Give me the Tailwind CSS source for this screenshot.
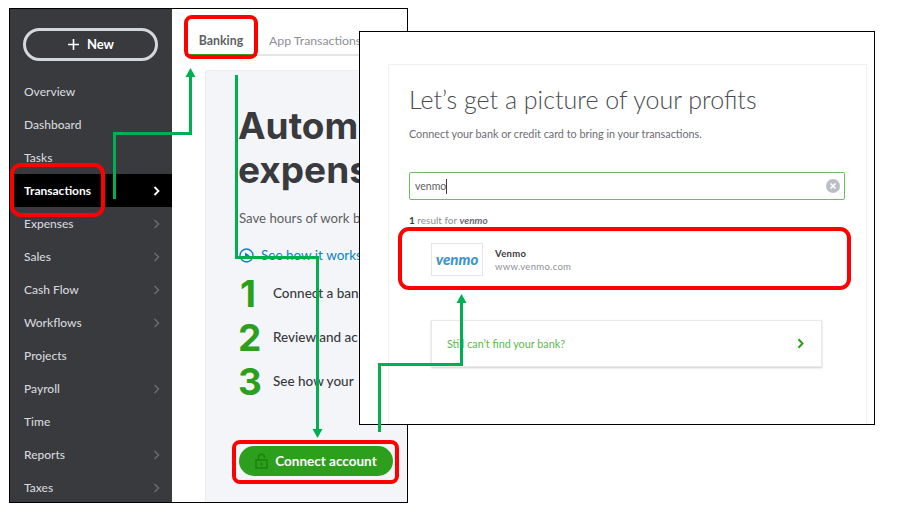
<!DOCTYPE html>
<html>
<head>
<meta charset="utf-8">
<script src="https://cdn.jsdelivr.net/npm/@tailwindcss/browser@4"></script>
</head>
<body class="bg-white">
<div class="relative w-[902px] h-[520px] overflow-hidden bg-white font-['Lato','Liberation_Sans',sans-serif]">

  <!-- Window 1 -->
  <div class="absolute left-[9px] top-[8px] w-[399px] h-[495px] border border-black flex overflow-hidden">
    <nav class="w-[162px] shrink-0 bg-[#393a3d] flex flex-col text-[#d4d7dc] text-[12px] font-medium overflow-hidden">
      <div class="shrink-0 pt-[19px] pl-[13px] pb-[14px]">
        <div class="w-[135px] h-[33px] rounded-full border-[3px] border-[#d4d7dc] flex items-center justify-center gap-[7px] text-white font-bold text-[13px]">
          <svg width="13" height="13" viewBox="0 0 13 13"><path d="M6.500 1v11M1 6.500h11" stroke="#fff" stroke-width="1.600"/></svg>
          <span>New</span>
        </div>
      </div>
      <div class="shrink-0 h-[33px] flex items-center px-[14px]">Overview</div>
      <div class="shrink-0 h-[33px] flex items-center px-[14px]">Dashboard</div>
      <div class="shrink-0 h-[33px] flex items-center px-[14px]">Tasks</div>
      <div class="shrink-0 h-[33px] flex items-center justify-between pl-[14px] pr-[12px] bg-black text-white font-bold">Transactions
        <svg width="7" height="10" viewBox="0 0 7 10"><path d="M1.500 1l4 4-4 4" fill="none" stroke="#fff" stroke-width="1.800"/></svg></div>
      <div class="shrink-0 h-[33px] flex items-center justify-between pl-[14px] pr-[12px]">Expenses
        <svg width="7" height="10" viewBox="0 0 7 10"><path d="M1.500 1l4 4-4 4" fill="none" stroke="#6b6c72" stroke-width="1.500"/></svg></div>
      <div class="shrink-0 h-[33px] flex items-center justify-between pl-[14px] pr-[12px]">Sales
        <svg width="7" height="10" viewBox="0 0 7 10"><path d="M1.500 1l4 4-4 4" fill="none" stroke="#6b6c72" stroke-width="1.500"/></svg></div>
      <div class="shrink-0 h-[33px] flex items-center justify-between pl-[14px] pr-[12px]">Cash Flow
        <svg width="7" height="10" viewBox="0 0 7 10"><path d="M1.500 1l4 4-4 4" fill="none" stroke="#6b6c72" stroke-width="1.500"/></svg></div>
      <div class="shrink-0 h-[33px] flex items-center justify-between pl-[14px] pr-[12px]">Workflows
        <svg width="7" height="10" viewBox="0 0 7 10"><path d="M1.500 1l4 4-4 4" fill="none" stroke="#6b6c72" stroke-width="1.500"/></svg></div>
      <div class="shrink-0 h-[33px] flex items-center px-[14px]">Projects</div>
      <div class="shrink-0 h-[33px] flex items-center justify-between pl-[14px] pr-[12px]">Payroll
        <svg width="7" height="10" viewBox="0 0 7 10"><path d="M1.500 1l4 4-4 4" fill="none" stroke="#6b6c72" stroke-width="1.500"/></svg></div>
      <div class="shrink-0 h-[33px] flex items-center px-[14px]">Time</div>
      <div class="shrink-0 h-[33px] flex items-center justify-between pl-[14px] pr-[12px]">Reports
        <svg width="7" height="10" viewBox="0 0 7 10"><path d="M1.500 1l4 4-4 4" fill="none" stroke="#6b6c72" stroke-width="1.500"/></svg></div>
      <div class="shrink-0 h-[33px] flex items-center justify-between pl-[14px] pr-[12px]">Taxes
        <svg width="7" height="10" viewBox="0 0 7 10"><path d="M1.500 1l4 4-4 4" fill="none" stroke="#6b6c72" stroke-width="1.500"/></svg></div>
    </nav>
    <main class="flex-1 min-w-0 flex flex-col">
      <div class="h-[47px] shrink-0 ml-[13px] border-b-2 border-[#e3e5e8] flex items-stretch whitespace-nowrap text-[12.300px]">
        <span class="w-[72px] flex items-end justify-center pb-[4px] border-b-2 border-[#2ca01c] -mb-[2px] font-bold text-[#5c5f64]">Banking</span>
        <span class="ml-[12px] flex items-end pb-[4px] text-[#8d9096]">App Transactions</span>
      </div>
      <div class="mt-[14px] ml-[33px] flex-1 bg-[#f4f5f8] border-t border-l border-[#eceef1] pl-[33px] pt-[33px] whitespace-nowrap">
        <div class="-ml-[1px] font-['Inter',sans-serif] text-[37px] leading-[44px] font-bold text-[#393a3d]">Autom<br>expens</div>
        <div class="mt-[16px] text-[13.200px] leading-[20px] text-[#5c5f64]">Save hours of work by</div>
        <div class="mt-[17px] flex items-center gap-[7px] text-[13.500px] leading-[20px] text-[#0d7fc9]">
          <svg width="15" height="15" viewBox="0 0 15 15"><circle cx="7.500" cy="7.500" r="6.500" fill="none" stroke="#0d7fc9" stroke-width="1.400"/><path d="M6 4.500l4.500 3-4.500 3z" fill="#0d7fc9"/></svg>
          <span>See how it works</span>
        </div>
        <div class="mt-[6px] flex items-center h-[44px]">
          <span class="w-[34px] pl-[1px] font-['Inter',sans-serif] text-[37px] font-bold text-[#2ca01c] leading-none">1</span>
          <span class="text-[13.500px] font-medium text-[#393a3d]">Connect a ban</span>
        </div>
        <div class="flex items-center h-[44px]">
          <span class="w-[34px] -ml-[1px] mr-[1px] font-['Inter',sans-serif] text-[37px] font-bold text-[#2ca01c] leading-none">2</span>
          <span class="text-[13.500px] font-medium text-[#393a3d]">Review and ac</span>
        </div>
        <div class="flex items-center h-[44px]">
          <span class="w-[34px] -ml-[1px] mr-[1px] font-['Inter',sans-serif] text-[37px] font-bold text-[#2ca01c] leading-none">3</span>
          <span class="text-[13.500px] font-medium text-[#393a3d]">See how your</span>
        </div>
        <div class="mt-[43px] w-[154px] h-[30px] rounded-full bg-[#2ca01c] flex items-center justify-center gap-[7px] text-white font-bold text-[13.500px]">
          <svg width="13" height="16" viewBox="0 0 13 16"><path d="M3.500 7V4.200a3 3 0 0 1 6 0V5" fill="none" stroke="#1d7f10" stroke-width="1.500"/><rect x="1" y="7" width="11" height="8" fill="none" stroke="#1d7f10" stroke-width="1.500"/><circle cx="6.500" cy="11" r="1.200" fill="#1d7f10"/></svg>
          <span>Connect account</span>
        </div>
      </div>
    </main>
  </div>

  <!-- Window 2 -->
  <div class="absolute left-[359px] top-[31px] w-[516px] h-[394px] border border-black bg-white overflow-hidden">
    <div class="ml-[28px] mt-[32px] w-[479px] h-[400px] border border-[#f0f1f3] px-[20px]">
      <h1 class="mt-[18px] text-[25px] leading-[32px] font-light text-[#4a4c50]">Let’s get a picture of your profits</h1>
      <p class="mt-[12px] text-[10.800px] leading-[14px] text-[#6b6c72]">Connect your bank or credit card to bring in your transactions.</p>
      <div class="mt-[31px] w-[436px] h-[28px] rounded-[2px] border-[1.500px] border-[#6cbf5f] flex items-center justify-between pl-[5px] pr-[4px] text-[10.500px] text-[#5c5f64]">
        <span class="border-r border-[#393a3d] leading-[15px]">venmo</span>
        <svg width="14" height="14" viewBox="0 0 14 14"><circle cx="7" cy="7" r="7" fill="#babec5"/><path d="M4.500 4.500l5 5M9.500 4.500l-5 5" stroke="#fff" stroke-width="1.600"/></svg>
      </div>
      <p class="mt-[13px] text-[10px] leading-[14px] text-[#8d9096]"><b class="text-[#393a3d]">1</b> result for <b class="italic text-[#6b6c72]">venmo</b></p>
      <div class="mt-[4px] w-[436px] h-[56px] border-y border-[#eceef1] flex items-center pl-[22px] gap-[12px]">
        <div class="w-[52px] h-[33px] border border-[#e3e5e8] flex items-center justify-center text-[#3d95ce] font-black italic text-[15px]">venmo</div>
        <div class="leading-[13px] pt-[2px]">
          <div class="text-[9.500px] font-bold text-[#393a3d] tracking-[0.3px]">Venmo</div>
          <div class="text-[9.500px] text-[#8d9096] tracking-[0.3px]">www.venmo.com</div>
        </div>
      </div>
      <div class="mt-[33px] ml-[22px] w-[391px] h-[47px] border border-[#e8e9ec] shadow-[0_1px_2px_rgba(0,0,0,0.2)] flex items-center justify-between pl-[15px] pr-[17px] text-[10.800px]">
        <span class="text-[#5ab94f] pt-[1px]">Still can’t find your bank?</span>
        <svg width="7" height="11" viewBox="0 0 7 11"><path d="M1.500 1.200l4 4.300-4 4.300" fill="none" stroke="#2ca01c" stroke-width="2"/></svg>
      </div>
    </div>
  </div>

  <!-- Annotations -->
  <div class="absolute left-[10px] top-[163px] w-[95px] h-[54px] rounded-[11px] border-[4px] border-[#ff0000]"></div>
  <div class="absolute left-[184px] top-[15px] w-[74px] h-[44px] rounded-[8px] border-[4px] border-[#ff0000]"></div>
  <div class="absolute left-[232px] top-[440px] w-[167px] h-[44px] rounded-[8px] border-[4px] border-[#ff0000]"></div>
  <div class="absolute left-[398px] top-[227px] w-[453px] h-[63px] rounded-[11px] border-[4px] border-[#ff0000]"></div>

  <svg class="absolute left-0 top-0" width="902" height="520" viewBox="0 0 902 520" fill="none">
    <path d="M114.500 199V133.500H190.500V76" stroke="#00b050" stroke-width="3"/>
    <path d="M190.500 68l-5 9h10z" fill="#00b050"/>
    <path d="M236.500 75V257.500H317.500V430" stroke="#00b050" stroke-width="3"/>
    <path d="M317.500 438l-5-9h10z" fill="#00b050"/>
    <path d="M379.500 432V364.500H461.500V302" stroke="#00b050" stroke-width="3"/>
    <path d="M461.500 294l-5 9h10z" fill="#00b050"/>
  </svg>
</div>
</body>
</html>
